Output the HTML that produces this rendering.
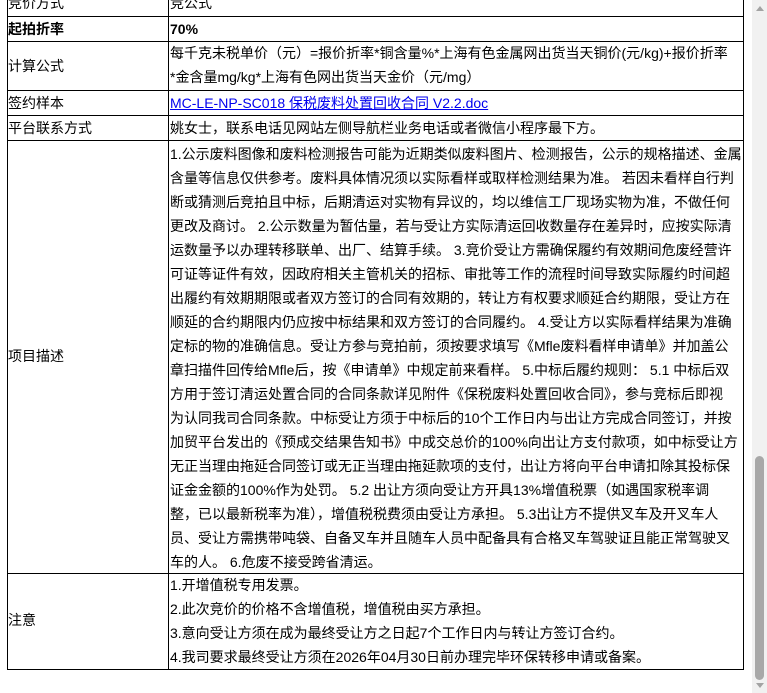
<!DOCTYPE html>
<html><head><meta charset="utf-8"><style>
html,body{margin:0;padding:0;background:#fff;width:767px;height:693px;overflow:hidden}
body{font-family:"Liberation Sans","Noto Sans CJK SC",sans-serif;font-size:14px;color:#000;position:relative}
.h{position:absolute;left:7px;width:737px;height:1px;background:#000}
.v{position:absolute;width:1px;background:#000}
.t{position:absolute;white-space:nowrap;line-height:24px}
.l{left:8px}.r{left:170px}
a{color:#00e;text-decoration:underline}
b{font-weight:bold}
#sb{position:absolute;left:752px;top:0;width:15px;height:693px;background:#f1f1f1}
#th{position:absolute;left:755px;top:456px;width:9px;height:224px;background:#a8a8a8;border-radius:5px}
</style></head><body>
<div class="v" style="left:7px;top:0;height:670px"></div>
<div class="v" style="left:168px;top:0;height:670px"></div>
<div class="v" style="left:743px;top:0;height:670px"></div>
<div class="h" style="top:16px"></div>
<div class="h" style="top:41px"></div>
<div class="h" style="top:90px"></div>
<div class="h" style="top:115px"></div>
<div class="h" style="top:140px"></div>
<div class="h" style="top:573px"></div>
<div class="h" style="top:669px"></div>

<div class="t l" style="top:-9px">竞价方式</div>
<div class="t r" style="top:-9px">竞公式</div>
<div class="t l" style="top:17px"><b>起拍折率</b></div>
<div class="t r" style="top:17px"><b>70%</b></div>
<div class="t l" style="top:54px">计算公式</div>
<div class="t r" style="top:41px">每千克未税单价（元）=报价折率*铜含量%*上海有色金属网出货当天铜价(元/kg)+报价折率<br>*金含量mg/kg*上海有色网出货当天金价（元/mg）</div>
<div class="t l" style="top:91px">签约样本</div>
<div class="t r" style="top:91px"><a>MC-LE-NP-SC018 保税废料处置回收合同 V2.2.doc</a></div>
<div class="t l" style="top:116px">平台联系方式</div>
<div class="t r" style="top:116px">姚女士，联系电话见网站左侧导航栏业务电话或者微信小程序最下方。</div>
<div class="t l" style="top:344px">项目描述</div>
<div class="t r" style="top:142px">1.公示废料图像和废料检测报告可能为近期类似废料图片、检测报告，公示的规格描述、金属<br>含量等信息仅供参考。废料具体情况须以实际看样或取样检测结果为准。 若因未看样自行判<br>断或猜测后竞拍且中标，后期清运对实物有异议的，均以维信工厂现场实物为准，不做任何<br>更改及商讨。 2.公示数量为暂估量，若与受让方实际清运回收数量存在差异时，应按实际清<br>运数量予以办理转移联单、出厂、结算手续。 3.竞价受让方需确保履约有效期间危废经营许<br>可证等证件有效，因政府相关主管机关的招标、审批等工作的流程时间导致实际履约时间超<br>出履约有效期期限或者双方签订的合同有效期的，转让方有权要求顺延合约期限，受让方在<br>顺延的合约期限内仍应按中标结果和双方签订的合同履约。 4.受让方以实际看样结果为准确<br>定标的物的准确信息。受让方参与竞拍前，须按要求填写《Mfle废料看样申请单》并加盖公<br>章扫描件回传给Mfle后，按《申请单》中规定前来看样。 5.中标后履约规则： 5.1 中标后双<br>方用于签订清运处置合同的合同条款详见附件《保税废料处置回收合同》，参与竞标后即视<br>为认同我司合同条款。中标受让方须于中标后的10个工作日内与出让方完成合同签订，并按<br>加贸平台发出的《预成交结果告知书》中成交总价的100%向出让方支付款项，如中标受让方<br>无正当理由拖延合同签订或无正当理由拖延款项的支付，出让方将向平台申请扣除其投标保<br>证金金额的100%作为处罚。 5.2 出让方须向受让方开具13%增值税票（如遇国家税率调<br>整，已以最新税率为准），增值税税费须由受让方承担。 5.3出让方不提供叉车及开叉车人<br>员、受让方需携带吨袋、自备叉车并且随车人员中配备具有合格叉车驾驶证且能正常驾驶叉<br>车的人。 6.危废不接受跨省清运。</div>
<div class="t l" style="top:608px">注意</div>
<div class="t r" style="top:573px">1.开增值税专用发票。<br>2.此次竞价的价格不含增值税，增值税由买方承担。<br>3.意向受让方须在成为最终受让方之日起7个工作日内与转让方签订合约。<br>4.我司要求最终受让方须在2026年04月30日前办理完毕环保转移申请或备案。</div>

<div id="sb"></div><div id="th"></div>
<div style="position:absolute;left:756px;top:6px;width:0;height:0;border-left:4px solid transparent;border-right:4px solid transparent;border-bottom:5px solid #a3a3a3"></div>
<div style="position:absolute;left:756px;top:683px;width:0;height:0;border-left:4px solid transparent;border-right:4px solid transparent;border-top:5px solid #a3a3a3"></div>
</body></html>
